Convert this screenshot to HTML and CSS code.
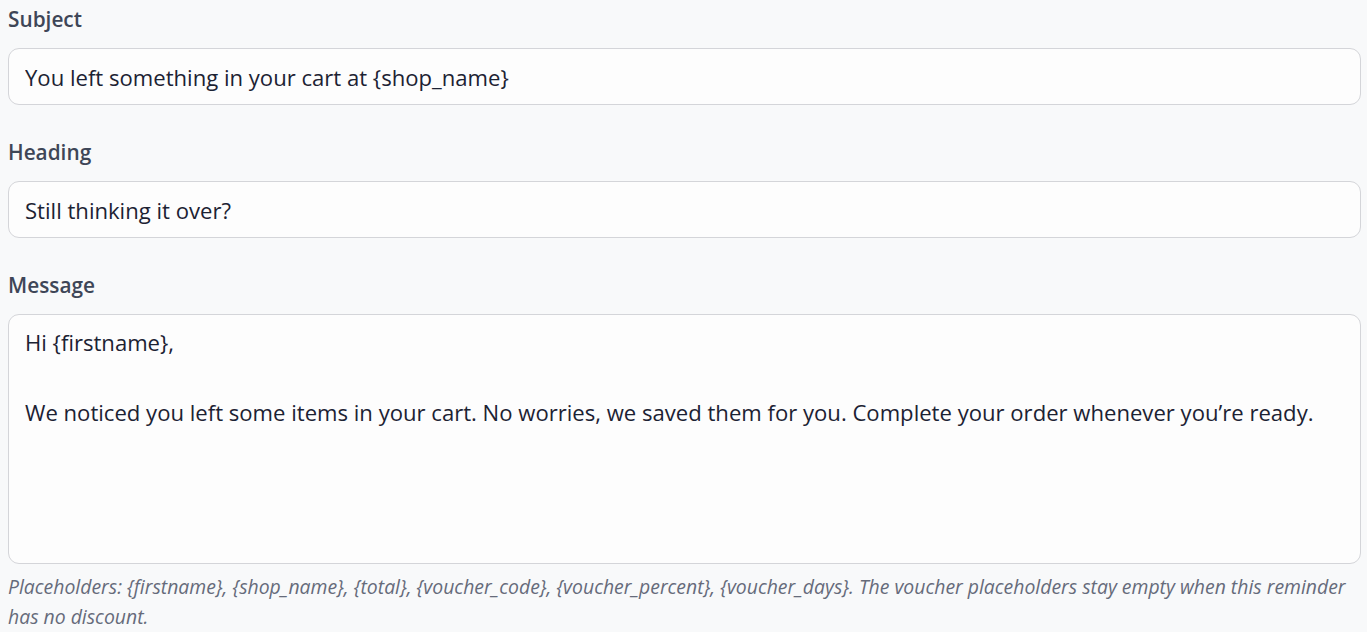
FILE: index.html
```html
<!DOCTYPE html>
<html lang="en">
<head>
<meta charset="utf-8">
<title>Reminder email</title>
<link rel="stylesheet" href="styles.css">
</head>
<body>
<form class="form">
  <div class="field">
    <label class="label" for="subject">Subject</label>
    <input class="input" id="subject" type="text" value="You left something in your cart at {shop_name}">
  </div>
  <div class="field">
    <label class="label" for="heading">Heading</label>
    <input class="input" id="heading" type="text" value="Still thinking it over?">
  </div>
  <div class="field field-last">
    <label class="label" for="message">Message</label>
    <textarea class="textarea" id="message">Hi {firstname},

We noticed you left some items in your cart. No worries, we saved them for you. Complete your order whenever you’re ready.</textarea>
    <p class="hint">Placeholders: {firstname}, {shop_name}, {total}, {voucher_code}, {voucher_percent}, {voucher_days}. The voucher placeholders stay empty when this reminder has no discount.</p>
  </div>
</form>
</body>
</html>
```
FILE: styles.css
```css
html, body {
  margin: 0;
  padding: 0;
  background: #f8f9fa;
}
body {
  font-family: "Open Sans", "Noto Sans", sans-serif;
  color: #1c2233;
}
.form {
  display: flex;
  flex-direction: column;
  gap: 32px;
  padding: 4px 6px 0 8px;
}
.field {
  display: flex;
  flex-direction: column;
}
.label {
  font-size: 20.8px;
  font-weight: 600;
  line-height: 30px;
  color: #3e4657;
  margin-bottom: 14px;
}
.input, .textarea {
  box-sizing: border-box;
  width: 100%;
  margin: 0;
  font-family: "Open Sans", "Noto Sans", sans-serif;
  font-size: 22.1px;
  color: #1c2233;
  background: #fdfdfd;
  border: 1.5px solid #d4d5d9;
  border-radius: 11px;
  outline: none;
}
.input {
  height: 57px;
  padding: 0 16px;
}
.textarea {
  height: 250px;
  padding: 10px 16px;
  line-height: 35px;
  resize: none;
  overflow: hidden;
}
.hint {
  margin: 8px 0 0;
  font-size: 19.4px;
  font-style: italic;
  line-height: 30px;
  color: #666b7a;
}
```
